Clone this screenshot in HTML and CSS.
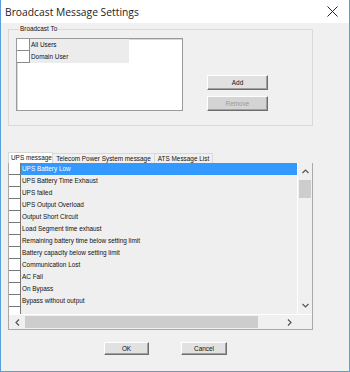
FILE: index.html
```html
<!DOCTYPE html>
<html lang="en">
<head>
  <meta charset="UTF-8" />
  <title>Broadcast Message Settings</title>
  <link rel="stylesheet" href="styles.css">
</head>
<body>

  <div class="window">
    <div class="titlebar">
      <span class="title">Broadcast Message Settings</span>
      <svg class="close" width="11" height="11" viewBox="0 0 11 11">
        <path d="M0.5 0.5 L10.5 10.5 M10.5 0.5 L0.5 10.5" stroke="#222" stroke-width="1" fill="none"/>
      </svg>
    </div>

    <div class="content">
      <fieldset class="group">
        <legend>Broadcast To</legend>
        <div class="group-body">
          <div class="listbox">
            <div class="lb-row"><span class="check"></span><span class="lb-text">All Users</span></div>
            <div class="lb-row"><span class="check"></span><span class="lb-text">Domain User</span></div>
          </div>
          <div class="side-buttons">
            <button class="btn">Add</button>
            <button class="btn" disabled>Remove</button>
          </div>
        </div>
      </fieldset>

      <div class="tabs">
        <div class="tab active">UPS message</div>
        <div class="tab">Telecom Power System message</div>
        <div class="tab">ATS Message List</div>
      </div>

      <div class="panel">
        <div class="panel-main">
          <div class="rows">
            <div class="row selected"><span class="check"></span><span class="row-text">UPS Battery Low</span></div>
            <div class="row"><span class="check"></span><span class="row-text">UPS Battery Time Exhaust</span></div>
            <div class="row"><span class="check"></span><span class="row-text">UPS failed</span></div>
            <div class="row"><span class="check"></span><span class="row-text">UPS Output Overload</span></div>
            <div class="row"><span class="check"></span><span class="row-text">Output Short Circuit</span></div>
            <div class="row"><span class="check"></span><span class="row-text">Load Segment time exhaust</span></div>
            <div class="row"><span class="check"></span><span class="row-text">Remaining battery time below setting limit</span></div>
            <div class="row"><span class="check"></span><span class="row-text">Battery capacity below setting limit</span></div>
            <div class="row"><span class="check"></span><span class="row-text">Communication Lost</span></div>
            <div class="row"><span class="check"></span><span class="row-text">AC Fail</span></div>
            <div class="row"><span class="check"></span><span class="row-text">On Bypass</span></div>
            <div class="row"><span class="check"></span><span class="row-text">Bypass without output</span></div>
            <div class="row"><span class="check"></span></div>
          </div>
          <div class="vscroll">
            <div class="arrow">
              <svg width="7" height="5" viewBox="0 0 7 5"><path d="M0.5 4 L3.5 1 L6.5 4" stroke="#555" stroke-width="1.2" fill="none"/></svg>
            </div>
            <div class="vthumb"></div>
            <div class="vtrack"></div>
            <div class="arrow">
              <svg width="7" height="5" viewBox="0 0 7 5"><path d="M0.5 1 L3.5 4 L6.5 1" stroke="#555" stroke-width="1.2" fill="none"/></svg>
            </div>
          </div>
        </div>
        <div class="hscroll">
          <div class="harrow">
            <svg width="5" height="7" viewBox="0 0 5 7"><path d="M4 0.5 L1 3.5 L4 6.5" stroke="#555" stroke-width="1.2" fill="none"/></svg>
          </div>
          <div class="hthumb"></div>
          <div class="htrack"></div>
          <div class="harrow">
            <svg width="5" height="7" viewBox="0 0 5 7"><path d="M1 0.5 L4 3.5 L1 6.5" stroke="#555" stroke-width="1.2" fill="none"/></svg>
          </div>
          <div class="corner"></div>
        </div>
      </div>

      <div class="footer">
        <button class="btn btn-ok">OK</button>
        <button class="btn btn-cancel">Cancel</button>
      </div>
    </div>
  </div>

</body>
</html>
```

FILE: styles.css
```css
* {
  box-sizing: border-box;
  margin: 0;
  padding: 0;
}

body {
  font-family: 'Liberation Sans', Arial, sans-serif;
  font-size: 6.4px;
  color: #111;
  background: #fff;
}

.window {
  width: 350px;
  height: 372px;
  border: 1px solid #5a9fdc;
  border-top: none;
  background-color: #f0f0f0;
  display: flex;
  flex-direction: column;
}

.titlebar {
  height: 23px;
  background-color: #fff;
  display: flex;
  align-items: center;
  justify-content: space-between;
  padding: 0 11px 0 4px;
}

.title {
  font-family: 'Open Sans', sans-serif;
  font-size: 10.3px;
  color: #222;
}

.content {
  padding: 0 36px 0 7px;
}

/* broadcast group */
.group {
  margin-top: 2px;
  border: 1px solid #d9d9d9;
  padding: 5px 7px 14px 7px;
}

.group legend {
  margin-left: 3px;
  padding: 0 1px;
  line-height: 8px;
}

.group-body {
  display: flex;
  align-items: flex-start;
}

.listbox {
  width: 167px;
  height: 73px;
  background-color: #fff;
  border: 1px solid #9a9a9a;
  box-shadow: inset 1px 1px 0 #d8d8d8;
}

.lb-row {
  display: flex;
  height: 12px;
}

.lb-row .check {
  width: 13px;
  height: 12px;
  background: #fff;
  border-right: 1px solid #8a8a8a;
  border-bottom: 1px solid #8a8a8a;
}

.lb-text {
  width: 99px;
  background-color: #ececec;
  line-height: 12px;
  padding-left: 1px;
}

.side-buttons {
  margin-left: 24px;
  margin-top: 37px;
  display: flex;
  flex-direction: column;
  gap: 6px;
}

.btn {
  font-family: 'Liberation Sans', Arial, sans-serif;
  font-size: 6.4px;
  color: #111;
  background-color: #e1e1e1;
  border: 1px solid;
  border-color: #fff #6e6e6e #6e6e6e #fff;
  box-shadow: inset -1px -1px 0 #a0a0a0;
  width: 61px;
  height: 15px;
}

.btn:disabled {
  background-color: #d4d4d4;
  color: #9a9a9a;
}

/* tabs */
.tabs {
  margin-top: 26px;
  display: flex;
  height: 11px;
  align-items: flex-end;
}

.tab {
  height: 10px;
  line-height: 9px;
  padding: 0 2px;
  white-space: nowrap;
  text-align: center;
  border: 1px solid #d9d9d9;
  border-bottom: none;
  border-left: none;
  background-color: #f0f0f0;
}

.tab.active {
  height: 11px;
  border-left: 1px solid #d9d9d9;
  background-color: #fff;
  width: 45px;
  line-height: 10px;
}

.tab:nth-child(2) {
  width: 102px;
}

.tab:nth-child(3) {
  width: 58px;
}

/* list panel */
.panel {
  height: 167px;
  border: 1px solid #a9a9a9;
  border-top: none;
  display: flex;
  flex-direction: column;
}

.panel-main {
  flex: 1;
  display: flex;
  overflow: hidden;
}

.rows {
  flex: 1;
  overflow: hidden;
  background-color: #efefef;
}

.row {
  display: flex;
  height: 12px;
}

.row .check {
  width: 12px;
  height: 12px;
  flex-shrink: 0;
  background: #fff;
  border-right: 1px solid #777;
  border-bottom: 1px solid #777;
}

.row-text {
  line-height: 12px;
  padding-left: 1px;
  white-space: nowrap;
}

.row.selected .row-text {
  flex: 1;
  background-color: #3399ff;
  color: #fff;
}

.vscroll {
  width: 15px;
  background-color: #f0f0f0;
  display: flex;
  flex-direction: column;
  border-left: 1px solid #fff;
}

.arrow {
  height: 17px;
  display: flex;
  align-items: center;
  justify-content: center;
}

.vthumb {
  height: 18px;
  margin: 0 1px;
  background-color: #cdcdcd;
}

.vtrack {
  flex: 1;
}

.hscroll {
  height: 15px;
  display: flex;
  background-color: #f0f0f0;
  border-top: 1px solid #fff;
}

.harrow {
  width: 16px;
  display: flex;
  align-items: center;
  justify-content: center;
}

.hthumb {
  width: 233px;
  margin: 1px 0;
  background-color: #cdcdcd;
}

.htrack {
  flex: 1;
}

.corner {
  width: 15px;
}

/* footer */
.footer {
  margin-top: 12px;
  display: flex;
  justify-content: center;
  gap: 32px;
  padding-left: 10px;
}

.btn-ok {
  width: 45px;
  height: 13px;
}

.btn-cancel {
  width: 46px;
  height: 13px;
}
```
